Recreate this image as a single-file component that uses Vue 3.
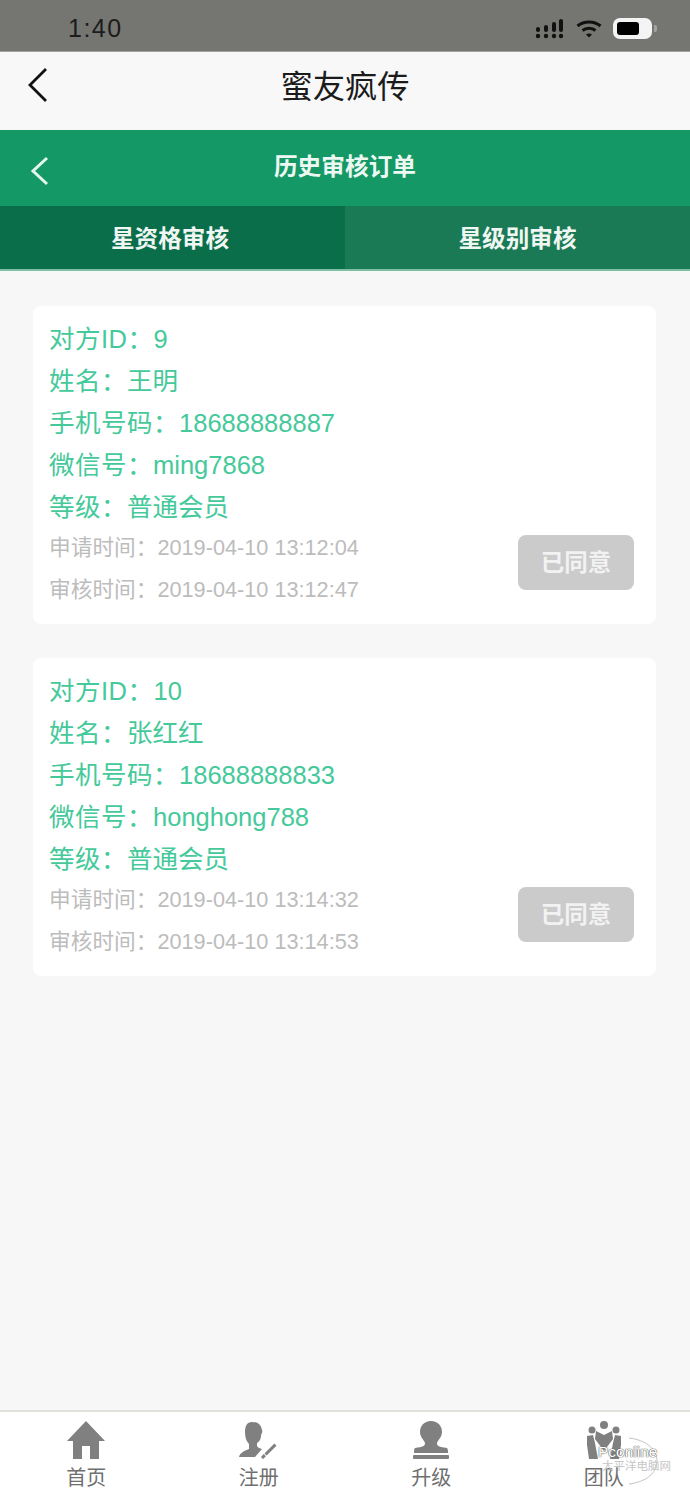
<script setup>
import { ref } from 'vue';

const colon = '\uFF1A';
const orders = ref([
  { id: '9', name: '王明', phone: '18688888887', wechat: 'ming7868', level: '普通会员', applied: '2019-04-10 13:12:04', reviewed: '2019-04-10 13:12:47' },
  { id: '10', name: '张红红', phone: '18688888833', wechat: 'honghong788', level: '普通会员', applied: '2019-04-10 13:14:32', reviewed: '2019-04-10 13:14:53' }
]);
</script>

<template>
  <div class="page">
    <div class="status-bar">
      <span class="time">1:40</span>
      <div class="status-icons">
        <svg width="29" height="20" viewBox="0 0 29 20" fill="#111">
          <circle cx="3" cy="17" r="2.200" /><circle cx="11" cy="17" r="2.200" /><circle cx="19" cy="17" r="2.200" /><circle cx="26" cy="17" r="2.200" />
          <rect x="1" y="8" width="4" height="5" rx="2" /><rect x="9" y="6" width="4" height="7" rx="2" /><rect x="17" y="3" width="4" height="10" rx="2" /><rect x="24" y="0" width="4" height="13" rx="2" />
        </svg>
        <svg class="wifi" width="26" height="18" viewBox="0 0 26 18" fill="none" stroke="#111" stroke-width="3">
          <path d="M1.500 6C8 0.500 18 0.500 24.500 6" />
          <path d="M6.500 10.500C10 7.500 16 7.500 19.500 10.500" />
          <path d="M10 14.500L13 17.500L16 14.500C14 13 12 13 10 14.500Z" fill="#111" stroke="none" />
        </svg>
        <div class="battery"><div class="battery-level"></div></div>
      </div>
    </div>

    <div class="app-nav">
      <svg class="app-back" width="22" height="36" viewBox="0 0 22 36" fill="none" stroke="#111" stroke-width="2.800">
        <path d="M19 2L3 18L19 34" />
      </svg>
      <span class="app-title">蜜友疯传</span>
    </div>

    <div class="green-header">
      <svg class="green-back" width="20" height="30" viewBox="0 0 20 30" fill="none" stroke="#e6f5ee" stroke-width="3">
        <path d="M17 2L3 15L17 28" />
      </svg>
      <span class="green-title">历史审核订单</span>
    </div>

    <div class="tabs">
      <div class="tab active">星资格审核</div>
      <div class="tab">星级别审核</div>
    </div>

    <div class="list">
      <div v-for="o in orders" :key="o.id" class="card">
        <div class="row"><span class="label">对方ID{{ colon }}</span>{{ o.id }}</div>
        <div class="row"><span class="label">姓名{{ colon }}</span>{{ o.name }}</div>
        <div class="row"><span class="label">手机号码{{ colon }}</span>{{ o.phone }}</div>
        <div class="row"><span class="label">微信号{{ colon }}</span>{{ o.wechat }}</div>
        <div class="row"><span class="label">等级{{ colon }}</span>{{ o.level }}</div>
        <div class="bottom">
          <div class="times">
            <div class="time-row">申请时间{{ colon }}{{ o.applied }}</div>
            <div class="time-row">审核时间{{ colon }}{{ o.reviewed }}</div>
          </div>
          <button class="agreed">已同意</button>
        </div>
      </div>
    </div>

    <div class="tabbar">
      <div class="tab-item">
        <svg width="40" height="38" viewBox="0 0 40 38" fill="#808080">
          <path d="M20 0L39 20H33V38H24V25H16V38H7V20H1Z" />
        </svg>
        <span>首页</span>
      </div>
      <div class="tab-item">
        <svg width="42" height="38" viewBox="0 0 42 38" fill="#808080">
          <path d="M14 1C20 1 23 4 24 9C25 11 23 13 23 15C23 18 21 21 19 22V25C20 27 22 27 24 28L17 36H1C2 32 6 30 11 28V23C8 20 7 16 7 11C7 5 9 1 14 1Z" />
          <path d="M24 37L40 21" fill="none" stroke="#808080" stroke-width="3" stroke-dasharray="4 1 14" />
        </svg>
        <span>注册</span>
      </div>
      <div class="tab-item">
        <svg width="38" height="38" viewBox="0 0 38 38" fill="#808080">
          <path d="M19 0C26 0 30 5 30 11C30 16 26 19 25 22C25 25 27 26 35 27C36 28 36 30 36 32H2C2 30 2 28 3 27C11 26 13 25 13 22C12 19 8 16 8 11C8 5 12 0 19 0Z" />
          <rect x="1" y="34" width="36" height="4" rx="1" />
        </svg>
        <span>升级</span>
      </div>
      <div class="tab-item">
        <svg width="36" height="38" viewBox="0 0 36 38" fill="#808080">
          <circle cx="18" cy="4" r="4" /><circle cx="6" cy="9" r="3.500" /><circle cx="30" cy="9" r="3.500" />
          <path d="M10 10L18 14L26 10L27 18L18 30L9 18Z" />
          <path d="M1 15L7 14L9 22L12 38H3L1 24Z" />
          <path d="M35 15L29 14L27 22L24 38H33L35 24Z" />
        </svg>
        <span>团队</span>
      </div>
    </div>

    <div class="watermark">
      <svg class="wm-arc" width="31" height="48" viewBox="0 0 31 48" fill="none" stroke="#c4c4c4" stroke-width="1">
        <path d="M1 1C18 3 29 12 29 24C29 36 18 45 1 47" />
      </svg>
      <div class="wm-logo">Pconline</div>
      <div class="wm-sub">太平洋电脑网</div>
    </div>
  </div>
</template>

<style scoped>
.page {
  position: relative;
  width: 690px;
  height: 1493px;
  display: flex;
  flex-direction: column;
  background: #f7f7f7;
  overflow: hidden;
  font-family: "Liberation Sans", "Noto Sans CJK SC", sans-serif;
}

.status-bar {
  flex: none;
  height: 52px;
  box-sizing: border-box;
  background: #757672;
  border-bottom: 1px solid #a5a5a3;
  display: flex;
  align-items: center;
  justify-content: space-between;
  padding: 6px 38px 0 68px;
}

.time {
  font-size: 25px;
  color: #1c1c1c;
  letter-spacing: 1.500px;
}

.status-icons {
  display: flex;
  align-items: center;
}

.wifi {
  margin-left: 12px;
}

.battery {
  position: relative;
  width: 39px;
  height: 21px;
  margin-left: 11px;
  padding: 4px;
  background: #f4f4f4;
  border-radius: 7px;
  box-sizing: border-box;
}

.battery::after {
  content: "";
  position: absolute;
  right: -5px;
  top: 7px;
  width: 3px;
  height: 7px;
  border-radius: 0 2px 2px 0;
  background: #a2a2a0;
}

.battery-level {
  width: 22px;
  height: 13px;
  background: #000;
  border-radius: 3px;
}

.app-nav {
  height: 78px;
  flex: none;
  position: relative;
  display: flex;
  justify-content: center;
  background: #f8f8f8;
}

.app-back {
  position: absolute;
  left: 27px;
  top: 15px;
}

.app-title {
  font-size: 32.300px;
  line-height: 70px;
  color: #1b1b1b;
}

.green-header {
  height: 76px;
  flex: none;
  position: relative;
  display: flex;
  justify-content: center;
  background: #149966;
}

.green-back {
  position: absolute;
  left: 30px;
  top: 26px;
}

.green-title {
  font-size: 23.700px;
  font-weight: 700;
  line-height: 75px;
  color: #eef8f3;
}

.tabs {
  height: 65px;
  flex: none;
  display: flex;
  background: #1a7a55;
  border-bottom: 2px solid #7fbfa5;
  box-sizing: border-box;
}

.tab {
  width: 50%;
  box-sizing: border-box;
  text-align: center;
  font-size: 23.600px;
  font-weight: 700;
  line-height: 67px;
  color: #f0f7f3;
  background: #1a7a55;
}

.tab.active {
  background: #0a6e4a;
  padding-right: 5px;
}

.list {
  flex: 1;
  padding: 35px 34px 0 33px;
  display: flex;
  flex-direction: column;
  gap: 34px;
}

.card {
  height: 318px;
  box-sizing: border-box;
  padding: 12px 22px 0 16px;
  background: #fff;
  border-radius: 8px;
}

.row {
  height: 42px;
  line-height: 42px;
  font-size: 25.500px;
  color: #45c99a;
  white-space: nowrap;
}

.label {
  letter-spacing: 0.500px;
}

.bottom {
  display: flex;
  align-items: flex-start;
  justify-content: space-between;
}

.times {
  margin-top: -1px;
  color: #bcbcbc;
}

.time-row {
  height: 42px;
  line-height: 42px;
  font-size: 21.700px;
  white-space: nowrap;
}

.agreed {
  width: 116px;
  height: 55px;
  margin-top: 7px;
  border: none;
  border-radius: 8px;
  background: #cbcbcb;
  color: #f2f2f2;
  font-family: inherit;
  font-size: 23.500px;
  font-weight: 700;
  padding: 0 0 4px;
}

.tabbar {
  height: 83px;
  flex: none;
  display: flex;
  box-sizing: border-box;
  background: #fff;
  border-top: 2px solid #e2e2dc;
}

.tab-item {
  flex: 1;
  display: flex;
  flex-direction: column;
  align-items: center;
  padding-top: 9px;
  font-size: 20px;
  line-height: 20px;
  color: #6f6f6f;
}

.tab-item span {
  margin-top: 9px;
}

.watermark {
  position: absolute;
  left: 598px;
  top: 1444px;
  color: #fff;
  text-shadow: 0 0 1px #666, 0 0 1px #666, 0 0 1px #666;
}

.wm-arc {
  position: absolute;
  left: 30px;
  top: -7px;
}

.wm-logo {
  position: relative;
  font-size: 15.500px;
  line-height: 15px;
}

.wm-sub {
  position: relative;
  margin: 2px 0 0 4px;
  font-size: 11.500px;
  line-height: 10px;
  color: #c6c6c6;
  text-shadow: none;
  white-space: nowrap;
}
</style>

<style>
html, body {
  background: #f7f7f7;
}
</style>
